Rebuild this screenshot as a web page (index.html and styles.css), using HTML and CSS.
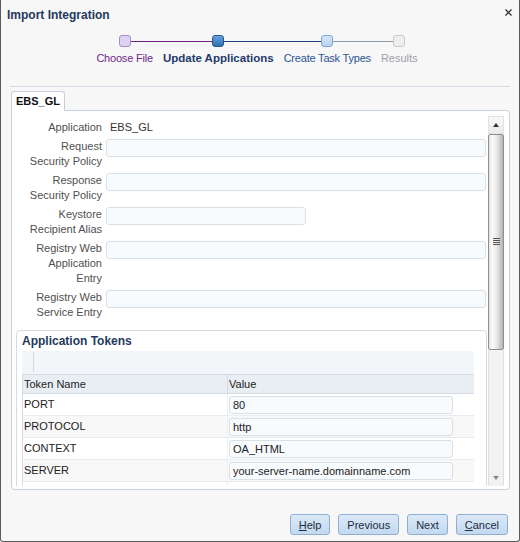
FILE: index.html
```html
<!DOCTYPE html>
<html>
<head>
<meta charset="utf-8">
<link rel="stylesheet" href="styles.css">
</head>
<body>
<div class="dialog">
  <div class="titlebar">
    <span class="title">Import Integration</span>
    <svg class="close" width="7" height="7" viewBox="0 0 7 7"><path d="M0.5 0.5L6.5 6.5M6.5 0.5L0.5 6.5" stroke="#222" stroke-width="1.2" fill="none"/></svg>
  </div>
  <div class="train">
    <div class="step s1"><span class="node"></span><span class="slabel">Choose File</span></div>
    <div class="step s2"><span class="node"></span><span class="slabel">Update Applications</span></div>
    <div class="step s3"><span class="node"></span><span class="slabel">Create Task Types</span></div>
    <div class="step s4"><span class="node"></span><span class="slabel">Results</span></div>
  </div>
  <div class="sep"></div>
  <div class="tabs"><div class="tab">EBS_GL</div></div>
  <div class="panel">
    <div class="scroll">
      <div class="form">
        <div class="flabel">Application</div><div class="fval">EBS_GL</div>
        <div class="flabel">Request Security Policy</div><div class="field w-long"></div>
        <div class="flabel">Response Security Policy</div><div class="field w-long"></div>
        <div class="flabel">Keystore Recipient Alias</div><div class="field w-short"></div>
        <div class="flabel">Registry Web Application Entry</div><div class="field w-long"></div>
        <div class="flabel">Registry Web Service Entry</div><div class="field w-long"></div>
      </div>
      <div class="tokens">
        <h3 class="tk-title">Application Tokens</h3>
        <div class="toolbar"><span class="tb-sep"></span></div>
        <div class="tgrid">
          <div class="thead"><div class="c1">Token Name</div><div class="c2">Value</div></div>
          <div class="trow"><div class="c1">PORT</div><div class="c2"><div class="tin">80</div></div></div>
          <div class="trow alt"><div class="c1">PROTOCOL</div><div class="c2"><div class="tin">http</div></div></div>
          <div class="trow"><div class="c1">CONTEXT</div><div class="c2"><div class="tin">OA_HTML</div></div></div>
          <div class="trow alt"><div class="c1">SERVER</div><div class="c2"><div class="tin">your-server-name.domainname.com</div></div></div>
          <div class="trow"><div class="c1"></div><div class="c2"></div></div>
        </div>
      </div>
    </div>
    <div class="vscroll">
      <div class="sb-up"><span class="tri-up"></span></div>
      <div class="sb-thumb"><span class="grip"></span></div>
      <div class="sb-track"></div>
      <div class="sb-down"><span class="tri-down"></span></div>
    </div>
  </div>
  <div class="footer">
    <button class="btn"><u>H</u>elp</button>
    <button class="btn">Previous</button>
    <button class="btn">Next</button>
    <button class="btn"><u>C</u>ancel</button>
  </div>
</div>
</body>
</html>
```
FILE: styles.css
```css
body {
  margin: 0;
  font-family: "Liberation Sans", Arial, sans-serif;
  font-size: 11px;
  color: #333;
}
.dialog {
  width: 520px;
  height: 542px;
  box-sizing: border-box;
  border: 1px solid #5a5a5a;
  border-top: none;
  border-radius: 0 0 3px 3px;
  background: #f7f7f7;
  display: flex;
  flex-direction: column;
}
.titlebar {
  height: 30px;
  display: flex;
  justify-content: space-between;
  align-items: center;
  padding: 0 7px 0 6px;
}
.title {
  font-weight: bold;
  font-size: 12px;
  color: #1f3a5c;
}
.close {
  align-self: flex-start;
  margin-top: 9px;
}
.train {
  display: flex;
  justify-content: center;
  padding: 5px 6px 0 0;
}
.step {
  position: relative;
  display: flex;
  flex-direction: column;
  align-items: center;
  padding: 0 5px;
}
.step::before, .step::after {
  content: "";
  position: absolute;
  top: 6px;
  height: 1px;
}
.step::before { left: 0; right: 50%; }
.step::after { left: 50%; right: 0; }
.s1::before, .s4::after { display: none; }
.s1::after, .s2::before { background: #6c1f7e; }
.s2::after, .s3::before { background: #1f3d7a; }
.s3::after, .s4::before { background: #8c97a8; }
.node {
  position: relative;
  z-index: 1;
  width: 12px;
  height: 12px;
  box-sizing: border-box;
  border-radius: 3px;
  border: 1px solid;
}
.s1 .node { background: #ddd2f1; border-color: #a68dca; }
.s2 .node { background: linear-gradient(#66a5de, #2f6fb0); border-color: #27578f; }
.s3 .node { background: linear-gradient(#d4e6f8, #b7d3f0); border-color: #7da6d2; }
.s4 .node { background: #eeeeee; border-color: #c9c9c9; }
.slabel {
  margin-top: 4px;
  line-height: 14px;
  white-space: nowrap;
}
.s1 .slabel { color: #6e2b8b; letter-spacing: -0.2px; }
.s2 .slabel { color: #1f3a6b; font-weight: bold; font-size: 11.5px; }
.s3 .slabel { color: #2b5596; letter-spacing: -0.2px; }
.s4 .slabel { color: #9aa0a8; }
.sep {
  margin: 21px 9px 0 9px;
  height: 1px;
  background: #d3dbe4;
}
.tabs {
  display: flex;
  padding-left: 10px;
  margin-top: 4px;
}
.tab {
  position: relative;
  z-index: 1;
  width: 54px;
  height: 20px;
  box-sizing: border-box;
  border: 1px solid #c6d1dc;
  border-bottom: none;
  border-radius: 3px 3px 0 0;
  background: #fff;
  margin-bottom: -1px;
  text-align: center;
  line-height: 19px;
  font-weight: bold;
  color: #111;
}
.panel {
  margin-left: 10px;
  width: 499px;
  height: 380px;
  box-sizing: border-box;
  border: 1px solid #c6d1dc;
  border-radius: 0 4px 4px 4px;
  background: #fff;
  display: flex;
  padding: 5px 5px 3px 0;
}
.scroll {
  width: 476px;
  height: 370px;
  overflow: hidden;
}
.form {
  display: grid;
  grid-template-columns: 90px auto;
  column-gap: 4px;
  row-gap: 4px;
  padding-top: 4px;
  justify-items: start;
}
.flabel {
  justify-self: stretch;
  text-align: right;
  line-height: 15px;
  padding-left: 15px;
  color: #505050;
}
.fval {
  line-height: 15px;
  padding-left: 4px;
  color: #333;
}
.field {
  height: 18px;
  box-sizing: border-box;
  border: 1px solid #d8dfe6;
  border-radius: 3px;
  background: #f7fbfe;
}
.w-long { width: 380px; }
.w-short { width: 200px; }
.tokens {
  margin: 10px 1px 0 4px;
  border: 1px solid #d3dbe3;
  border-radius: 4px;
  padding: 3px 12px 0 5px;
}
.tk-title {
  margin: 0 0 3px 0;
  font-size: 12px;
  line-height: 14px;
  font-weight: bold;
  color: #1f3a5c;
}
.toolbar {
  height: 23px;
  background: #f3f6f9;
  display: flex;
}
.tb-sep {
  margin: 1px 0 0 11px;
  width: 1px;
  height: 20px;
  background: #d3d8de;
}
.tgrid {
  border-left: 1px solid #d7dde4;
}
.thead, .trow {
  display: grid;
  grid-template-columns: 204px 1fr;
}
.thead {
  height: 18px;
  border-top: 1px solid #d3dae2;
  border-bottom: 1px solid #d3dae2;
  background: #e9eef4;
  line-height: 18px;
  color: #222;
}
.thead .c1 { padding-left: 1px; }
.thead .c2 { border-left: 1px solid #d3dae2; padding-left: 1px; }
.trow {
  height: 21px;
  border-bottom: 1px solid #e7eaee;
  background: #fff;
  color: #222;
}
.trow.alt { background: #f8f8f8; }
.trow .c1 { padding-left: 1px; line-height: 21px; }
.trow .c2 {
  border-left: 1px solid #f0f0f0;
  display: flex;
  align-items: center;
}
.tin {
  margin-left: 1px;
  width: 224px;
  height: 18px;
  box-sizing: border-box;
  border: 1px solid #d8dfe6;
  border-radius: 3px;
  background: #f7fbfe;
  padding-left: 3px;
  line-height: 16px;
  color: #222;
  white-space: nowrap;
}
.vscroll {
  width: 16px;
  height: 370px;
  display: flex;
  flex-direction: column;
}
.sb-up {
  height: 18px;
  box-sizing: border-box;
  background: linear-gradient(#f8f8f8, #ebebeb);
  border: 1px solid #e2e2e2;
  display: flex;
  align-items: center;
  justify-content: center;
}
.tri-up {
  width: 0;
  height: 0;
  border-left: 3.5px solid transparent;
  border-right: 3.5px solid transparent;
  border-bottom: 4px solid #333;
}
.sb-thumb {
  height: 216px;
  box-sizing: border-box;
  border: 1px solid #8f8f8f;
  border-radius: 2px;
  background: linear-gradient(to right, #e4e4e4, #fafafa 25%, #e4e4e4 60%, #b2b2b2);
  display: flex;
  align-items: center;
  justify-content: center;
}
.grip {
  width: 7px;
  height: 8px;
  background: repeating-linear-gradient(#555 0 1px, transparent 1px 2px);
}
.sb-track {
  flex: 1;
  background: #f2f2f2;
  border-left: 1px solid #dedede;
  border-right: 1px solid #dedede;
}
.sb-down {
  height: 16px;
  box-sizing: border-box;
  background: #f2f2f2;
  border-left: 1px solid #dedede;
  border-right: 1px solid #dedede;
  display: flex;
  align-items: center;
  justify-content: center;
}
.tri-down {
  width: 0;
  height: 0;
  border-left: 3.5px solid transparent;
  border-right: 3.5px solid transparent;
  border-top: 4px solid #888;
}
.footer {
  display: flex;
  justify-content: flex-end;
  gap: 8px;
  padding: 24px 11px 0 0;
}
.btn {
  height: 21px;
  box-sizing: border-box;
  border: 1px solid #8eaed2;
  border-radius: 3px;
  background: linear-gradient(#dbe9f8, #c3d9ef);
  font-family: "Liberation Sans", Arial, sans-serif;
  font-size: 11px;
  color: #1e2d3e;
  padding: 0 8px;
  margin: 0;
}
.btn u { text-decoration: underline; }
```
